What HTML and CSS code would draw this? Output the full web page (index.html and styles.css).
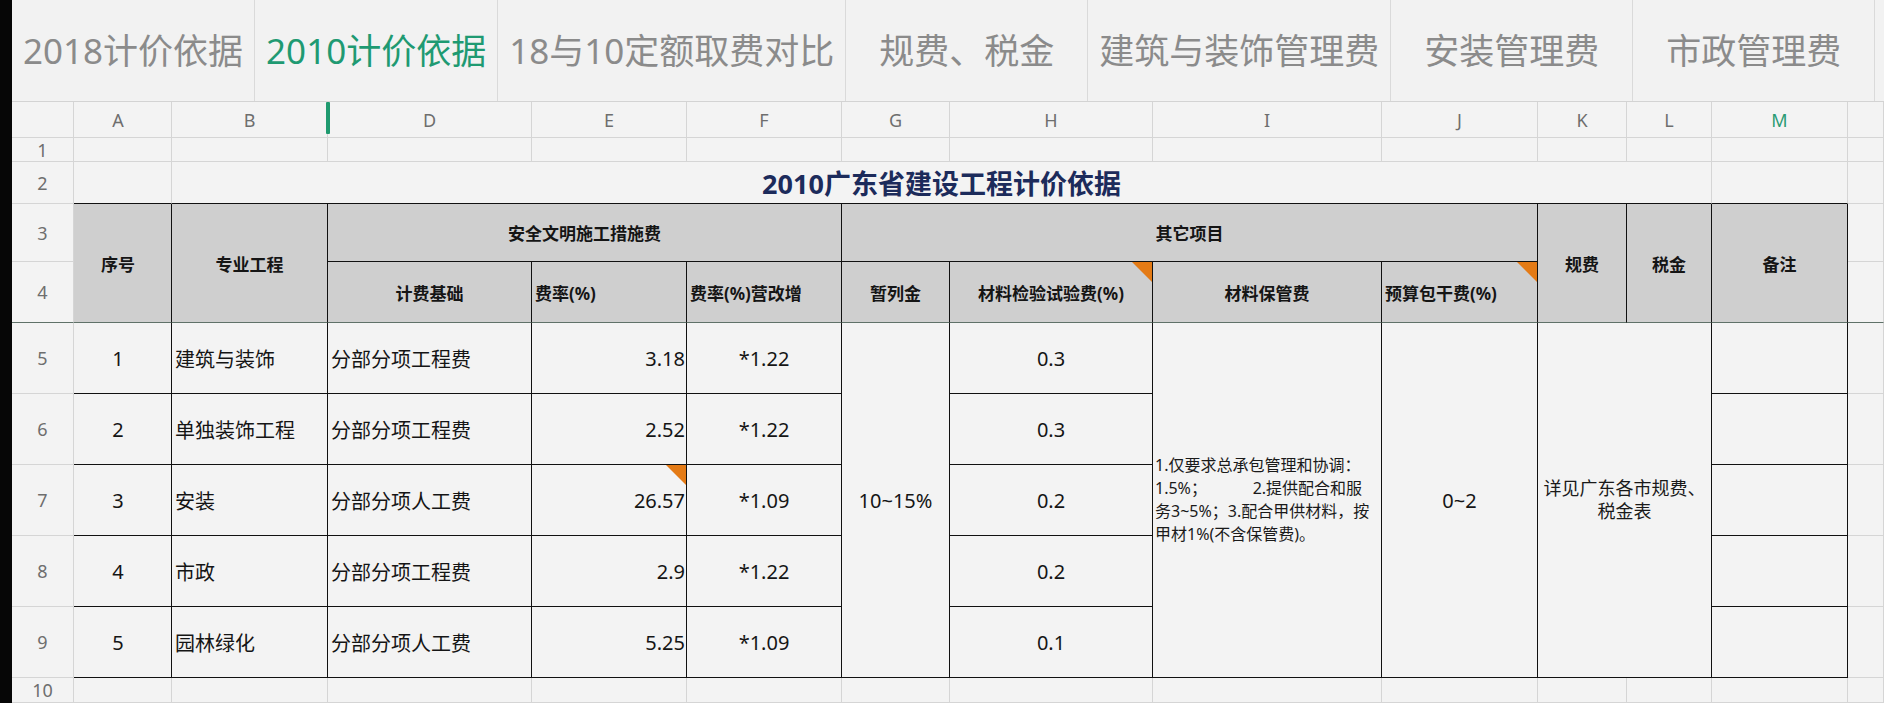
FILE: index.html
```html
<!DOCTYPE html>
<html lang="zh-CN">
<head>
<meta charset="utf-8">
<title>2010计价依据</title>
<link rel="stylesheet" href="styles.css">
</head>
<body>
<div class="app">
  <div class="edge"></div>
  <div class="main">
    <nav class="tabs">
      <div class="tab">2018计价依据</div>
      <div class="tab active">2010计价依据</div>
      <div class="tab">18与10定额取费对比</div>
      <div class="tab">规费、税金</div>
      <div class="tab">建筑与装饰管理费</div>
      <div class="tab">安装管理费</div>
      <div class="tab">市政管理费</div>
    </nav>
    <div class="sheet">
      <!-- column headers -->
      <div class="ch"></div>
      <div class="ch ca">A</div>
      <div class="ch">B</div>
      <div class="ch hidden-mark">D</div>
      <div class="ch">E</div>
      <div class="ch">F</div>
      <div class="ch">G</div>
      <div class="ch">H</div>
      <div class="ch">I</div>
      <div class="ch">J</div>
      <div class="ch">K</div>
      <div class="ch">L</div>
      <div class="ch sel">M</div>
      <div class="ch"></div>

      <!-- row 1 -->
      <div class="rh">1</div>
      <div></div><div></div><div></div><div></div><div></div><div></div><div></div><div></div><div></div><div></div><div></div><div></div><div></div>

      <!-- row 2 -->
      <div class="rh">2</div>
      <div class="tb"></div>
      <div class="tb title span10">2010广东省建设工程计价依据</div>
      <div class="tb"></div>
      <div></div>

      <!-- row 3 -->
      <div class="rh">3</div>
      <div class="hd rs2 fz ca">序号</div>
      <div class="hd rs2 fz">专业工程</div>
      <div class="hd cs3">安全文明施工措施费</div>
      <div class="hd cs4">其它项目</div>
      <div class="hd rs2 fz">规费</div>
      <div class="hd rs2 fz">税金</div>
      <div class="hd rs2 fz">备注</div>
      <div></div>

      <!-- row 4 -->
      <div class="rh fz">4</div>
      <div class="hd fz">计费基础</div>
      <div class="hd fz l">费率(%)</div>
      <div class="hd fz l">费率(%)营改增</div>
      <div class="hd fz">暂列金</div>
      <div class="hd fz tri">材料检验试验费(%)</div>
      <div class="hd fz">材料保管费</div>
      <div class="hd fz l tri">预算包干费(%)</div>
      <div class="fz"></div>

      <!-- row 5 -->
      <div class="rh">5</div>
      <div class="t ca">1</div>
      <div class="t l">建筑与装饰</div>
      <div class="t l">分部分项工程费</div>
      <div class="t r">3.18</div>
      <div class="t">*1.22</div>
      <div class="t rs5">10~15%</div>
      <div class="t">0.3</div>
      <div class="t rs5 note">
        <span>1.仅要求总承包管理和协调：</span>
        <span>1.5%；           2.提供配合和服</span>
        <span>务3~5%；3.配合甲供材料，按</span>
        <span>甲材1%(不含保管费)。</span>
      </div>
      <div class="t rs5">0~2</div>
      <div class="t rs5 cs2 fees">
        <span>详见广东各市规费、</span>
        <span>税金表</span>
      </div>
      <div class="t"></div>
      <div></div>

      <!-- row 6 -->
      <div class="rh">6</div>
      <div class="t ca">2</div>
      <div class="t l">单独装饰工程</div>
      <div class="t l">分部分项工程费</div>
      <div class="t r">2.52</div>
      <div class="t">*1.22</div>
      <div class="t">0.3</div>
      <div class="t"></div>
      <div></div>

      <!-- row 7 -->
      <div class="rh">7</div>
      <div class="t ca">3</div>
      <div class="t l">安装</div>
      <div class="t l">分部分项人工费</div>
      <div class="t r tri">26.57</div>
      <div class="t">*1.09</div>
      <div class="t">0.2</div>
      <div class="t"></div>
      <div></div>

      <!-- row 8 -->
      <div class="rh">8</div>
      <div class="t ca">4</div>
      <div class="t l">市政</div>
      <div class="t l">分部分项工程费</div>
      <div class="t r">2.9</div>
      <div class="t">*1.22</div>
      <div class="t">0.2</div>
      <div class="t"></div>
      <div></div>

      <!-- row 9 -->
      <div class="rh">9</div>
      <div class="t ca">5</div>
      <div class="t l">园林绿化</div>
      <div class="t l">分部分项人工费</div>
      <div class="t r">5.25</div>
      <div class="t">*1.09</div>
      <div class="t">0.1</div>
      <div class="t"></div>
      <div></div>

      <!-- row 10 -->
      <div class="rh">10</div>
      <div></div><div></div><div></div><div></div><div></div><div></div><div></div><div></div><div></div><div></div><div></div><div></div><div></div>
    </div>
  </div>
</div>
</body>
</html>
```

FILE: styles.css
```css
* {
  box-sizing: border-box;
}

html,
body {
  margin: 0;
  padding: 0;
}

body {
  width: 1884px;
  height: 703px;
  overflow: hidden;
  background: #f3f3f3;
  font-family: "Noto Sans", "Noto Sans CJK SC", sans-serif;
  color: #151515;
}

.app {
  display: flex;
  height: 703px;
}

.edge {
  flex: none;
  width: 12px;
  background: #060606;
}

.main {
  flex: 1;
  display: flex;
  flex-direction: column;
  min-width: 0;
}

/* ---------- sheet tabs ---------- */
.tabs {
  display: flex;
  flex: none;
  height: 102px;
  background: #f2f2f2;
  border-bottom: 1px solid #d3d3d3;
}

.tab {
  display: flex;
  align-items: center;
  justify-content: center;
  min-width: 242px;
  padding: 0 11px 5px;
  border-right: 1px solid #dadada;
  font-size: 35px;
  color: #8b8b8b;
  white-space: nowrap;
}

.tab.active {
  color: #1f9a72;
}

/* ---------- grid ---------- */
.sheet {
  display: grid;
  grid-template-columns: 62px 98px 156px 204px 155px 155px 108px 203px 229px 156px 89px 85px 136px 36px;
  grid-template-rows: 36px 24px 42px 58px 61px repeat(5, 71px) 25px;
}

.sheet > div {
  display: flex;
  align-items: center;
  justify-content: center;
  padding: 0 3px;
  border-right: 1px solid #d5d5d5;
  border-bottom: 1px solid #d5d5d5;
  white-space: nowrap;
}

.ch {
  font-size: 18px;
  color: #6e6e6e;
}

.ch.sel {
  color: #2a9b74;
}

.sheet > .ca {
  padding-right: 12px;
}

.hidden-mark {
  position: relative;
}

.hidden-mark::before {
  content: "";
  position: absolute;
  left: -2px;
  top: 0;
  bottom: 3px;
  width: 4px;
  background: #1f9a6f;
  border-radius: 1px;
}

.rh {
  font-size: 18px;
  color: #6e6e6e;
}

.span10 {
  grid-column: span 10;
}

.cs2 {
  grid-column: span 2;
}

.cs3 {
  grid-column: span 3;
}

.cs4 {
  grid-column: span 4;
}

.rs2 {
  grid-row: span 2;
}

.rs5 {
  grid-row: span 5;
}

.sheet > .tb {
  border-bottom-color: #111;
}

.title {
  font-size: 27px;
  font-weight: 700;
  color: #1c2b5b;
}

.sheet > .hd {
  background: #cfcfcf;
  font-size: 17px;
  font-weight: 700;
  color: #151515;
  border-right-color: #111;
  border-bottom-color: #111;
}

.sheet > .t {
  font-size: 20px;
  color: #151515;
  border-right-color: #111;
  border-bottom-color: #111;
}

.sheet > .fz {
  border-bottom-color: #5f7168;
}

.sheet > .l {
  justify-content: flex-start;
}

.sheet > .r {
  justify-content: flex-end;
  padding-right: 1px;
}

.tri {
  position: relative;
}

.tri::after {
  content: "";
  position: absolute;
  top: 0;
  right: 0;
  width: 20px;
  height: 20px;
  background: #e47b16;
  clip-path: polygon(0 0, 100% 0, 100% 100%);
}

.sheet > .note {
  flex-direction: column;
  align-items: flex-start;
  justify-content: center;
  padding: 0 2px;
  font-size: 16px;
  line-height: 23px;
  white-space: pre;
  color: #1a1a1a;
}

.note span,
.fees span {
  display: block;
}

.sheet > .fees {
  flex-direction: column;
  font-size: 18px;
  line-height: 23px;
  color: #1a1a1a;
}
```
